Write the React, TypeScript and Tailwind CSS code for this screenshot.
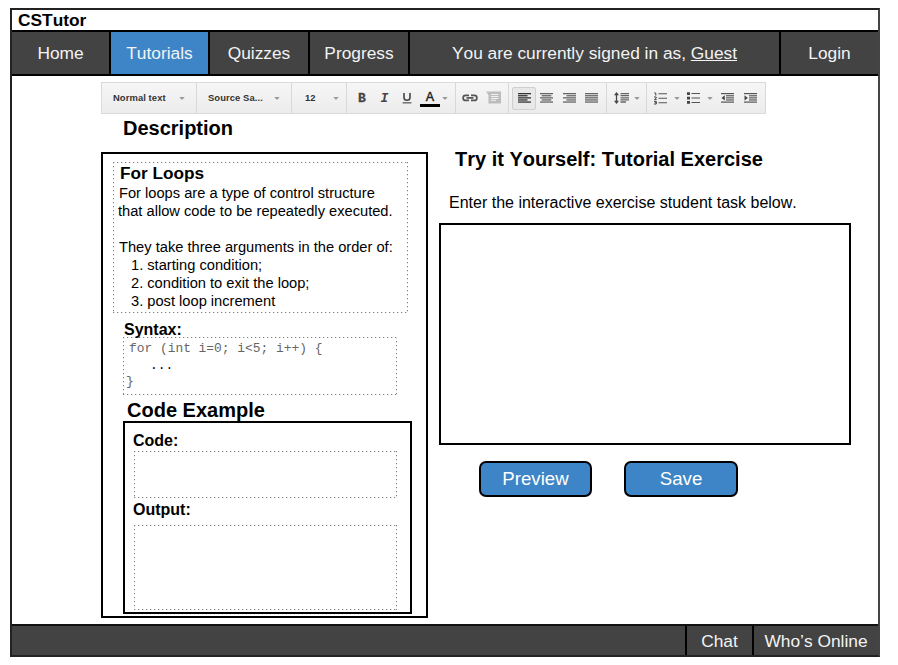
import React from "react";

function Caret({ className }: { className: string }) {
  return (
    <svg className={`shrink-0 ${className}`} width="6" height="3" viewBox="0 0 6 3">
      <path d="M0.3 0H5.7L3 3Z" fill="#999" />
    </svg>
  );
}

function Lines({ kind, className, color = "#666" }: { kind: "left" | "center" | "right" | "full"; className: string; color?: string }) {
  const shortX = kind === "center" ? 1.7 : kind === "right" ? 3.5 : 0;
  const shortW = kind === "full" ? 13 : kind === "center" ? 9.6 : 9.5;
  return (
    <svg className={`shrink-0 ${className}`} width="13" height="10" viewBox="0 0 13 10">
      {[0, 2.1, 4.2, 6.3, 8.4].map((y, i) => (
        <rect key={y} x={i % 2 ? shortX : 0} y={y} width={i % 2 ? shortW : 13} height="1.3" fill={color} />
      ))}
    </svg>
  );
}

function IndentIcon({ className, inward }: { className: string; inward: boolean }) {
  return (
    <svg className={`shrink-0 ${className}`} width="13" height="10" viewBox="0 0 13 10">
      <rect x="0" y="0" width="13" height="1.2" fill="#555" />
      <rect x="5" y="2.1" width="8" height="1.3" fill="#666" />
      <rect x="5" y="4.2" width="8" height="1.3" fill="#666" />
      <rect x="5" y="6.3" width="8" height="1.3" fill="#666" />
      <rect x="0" y="8.5" width="13" height="1.2" fill="#555" />
      <path d={inward ? "M0.5 2.2L3.8 4.9L0.5 7.6Z" : "M3.8 2.2L0.5 4.9L3.8 7.6Z"} fill="#444" />
    </svg>
  );
}

const section = "flex h-full shrink-0 items-center border-r border-[#d8d8d8]";

function Toolbar() {
  return (
    <div className="ml-[89px] mt-[6px] flex h-[32px] w-[665px] border border-r-0 border-[#dadada] bg-gradient-to-b from-[#f6f6f6] to-[#ececec] text-[9.4px] font-bold tracking-[0.1px] text-[#333]">
      <div className={`${section} w-[95px]`}>
        <span className="ml-[11px] w-[66px] whitespace-nowrap">Normal text</span>
        <Caret className="" />
      </div>
      <div className={`${section} w-[95px]`}>
        <span className="ml-[11px] w-[66px] whitespace-nowrap">Source Sa...</span>
        <Caret className="" />
      </div>
      <div className={`${section} w-[55px]`}>
        <span className="ml-[13px] w-[28px]">12</span>
        <Caret className="" />
      </div>
      <div className={`${section} w-[109px]`}>
        <span className="ml-[10px] w-[10px] text-center font-['Liberation_Mono'] text-[13px] leading-none text-[#444] [-webkit-text-stroke:0.3px_#444]">B</span>
        <span className="ml-[13px] w-[9px] text-center font-['Liberation_Mono'] text-[13px] italic leading-none text-[#444]">I</span>
        <svg className="ml-[13px] shrink-0" width="10" height="12" viewBox="0 0 10 12">
          <path d="M2 1V5.6Q2 8.3 5 8.3Q8 8.3 8 5.6V1" fill="none" stroke="#444" strokeWidth="1.6" />
          <rect x="0.6" y="10.3" width="8.8" height="1.1" fill="#444" />
        </svg>
        <span className="ml-[8px] mt-[1px] flex h-[17px] w-[20px] flex-col items-center justify-between font-normal text-[12.5px] leading-[14px] text-[#222]">
          <span className="[-webkit-text-stroke:0.4px_#222]">A</span>
          <span className="h-[3px] w-full shrink-0 bg-black" />
        </span>
        <Caret className="ml-[2px]" />
      </div>
      <div className={`${section} w-[53px]`}>
        <svg className="mb-[1px] ml-[6px] shrink-0" width="16" height="8" viewBox="0 0 16 8">
          <path d="M7 1.4H3.6A2.5 2.5 0 0 0 3.6 6.4H7M9 1.4H12.4A2.5 2.5 0 0 1 12.4 6.4H9M4.5 3.9H11.5" fill="none" stroke="#555" strokeWidth="1.7" />
        </svg>
        <svg className="mb-[1px] ml-[8px] shrink-0" width="15" height="13" viewBox="0 0 15 13">
          <path d="M0 0.5H15V12.5H2.5V4Z" fill="#bcbcbc" />
          <path d="M5 3.5H12.5M5 5.5H12.5M5 7.5H12.5M5 9.3H10" stroke="#f1f1f1" />
        </svg>
      </div>
      <div className={`${section} w-[98px]`}>
        <div className="ml-[3px] flex h-[23px] w-[24px] items-center justify-center rounded-[2px] border border-[#cfcfcf] bg-[#e8e8e8]">
          <Lines kind="left" color="#333" className="mb-px" />
        </div>
        <Lines kind="center" className="mb-px ml-[4px]" />
        <Lines kind="right" className="mb-px ml-[10px]" />
        <Lines kind="full" className="mb-px ml-[9px]" />
      </div>
      <div className={`${section} w-[40px]`}>
        <svg className="mb-px ml-[7px] shrink-0" width="15" height="12" viewBox="0 0 15 12">
          <path d="M2.5 1.5V10.5" stroke="#444" strokeWidth="1.3" />
          <path d="M0 3.3L2.5 0L5 3.3ZM0 8.7L2.5 12L5 8.7Z" fill="#444" />
          <path d="M6.5 1.6H15M6.5 3.7H15M6.5 5.8H15M6.5 7.9H15M6.5 10H12" stroke="#666" strokeWidth="1.3" />
        </svg>
        <Caret className="ml-[5px]" />
      </div>
      <div className={`${section} w-[119px]`}>
        <svg className="ml-[7px] shrink-0" width="13" height="13" viewBox="0 0 13 13">
          <path d="M0.3 1H1.8V3.6M0 5H2.2V6.2L0.5 7.6H2.6M0 9.4H2.3V12H0M0.8 10.7H2.3" stroke="#444" strokeWidth="1" fill="none" />
          <path d="M4.5 1.7H13M4.5 6.2H13M4.5 10.7H13" stroke="#555" strokeWidth="1.1" />
        </svg>
        <Caret className="ml-[7px]" />
        <svg className="mb-px ml-[7px] shrink-0" width="13" height="12" viewBox="0 0 13 12">
          <path d="M0 0.3H3V3H0ZM0 4.7H3V7.4H0ZM0 9.1H3V11.8H0Z" fill="#444" />
          <path d="M4.5 1.5H13M4.5 6H13M4.5 10.5H13" stroke="#555" strokeWidth="1.1" />
        </svg>
        <Caret className="ml-[7px]" />
        <IndentIcon inward={false} className="mb-px ml-[8px]" />
        <IndentIcon inward className="mb-px ml-[10px]" />
      </div>
    </div>
  );
}

const navCell = "flex shrink-0 items-center justify-center border-r-2 border-black pt-[2px]";
// One dot every four pixels along each edge.
const dotted =
  "[background:repeating-linear-gradient(90deg,#808080_0_1px,#ddd_1px_2px,transparent_2px_4px)_top/100%_1px_no-repeat,repeating-linear-gradient(90deg,#808080_0_1px,#ddd_1px_2px,transparent_2px_4px)_bottom/100%_1px_no-repeat,repeating-linear-gradient(180deg,#808080_0_1px,#ddd_1px_2px,transparent_2px_4px)_left/1px_100%_no-repeat,repeating-linear-gradient(180deg,#808080_0_1px,#ddd_1px_2px,transparent_2px_4px)_right/1px_100%_no-repeat]";

export default function App() {
  return (
    <div className="h-[665px] w-[898px] overflow-hidden bg-white pl-[10px] pt-[8px] font-['Liberation_Sans',Arial,sans-serif] text-black [font-kerning:none]">
      <div className="flex h-[649px] w-[870px] flex-col border-2 border-[#222] border-r-[#444]">
        <h1 className="h-[20px] shrink-0 whitespace-nowrap pl-[6px] text-[17.33px] font-bold leading-[21px]">CSTutor</h1>
        <nav className="flex h-[46px] shrink-0 border-y-2 border-black bg-[#434343] text-[17.33px] text-[#f3f3f3]">
          <div className={`${navCell} w-[99px]`}>Home</div>
          <div className={`${navCell} w-[99px] bg-[#3d85c6]`}>Tutorials</div>
          <div className={`${navCell} w-[100px]`}>Quizzes</div>
          <div className={`${navCell} w-[100px]`}>Progress</div>
          <div className={`${navCell} w-[371px]`}>
            <span>You are currently signed in as, <span className="underline">Guest</span></span>
          </div>
          <div className="flex flex-1 items-center justify-center pt-[2px]">Login</div>
        </nav>

        <main className="flex h-[548px] shrink-0 flex-col">
          <Toolbar />
          <div className="flex">
            <section className="ml-[89px] w-[327px] shrink-0">
              <h2 className="h-[38px] pl-[22px] text-[20px] font-bold leading-[28px]">Description</h2>
              <div className="h-[466px] border-2 border-black pl-[10px] pt-[8px]">
                <div className={`${dotted} h-[151px] w-[295px] pl-[6px] pt-px text-[14.67px] leading-[18px]`}>
                  <h3 className="pl-[1px] text-[17.2px] font-bold leading-[20px]">For Loops</h3>
                  <p className="whitespace-nowrap pt-[1px]">For loops are a type of control structure</p>
                  <p className="-ml-px whitespace-nowrap">that allow code to be repeatedly executed.</p>
                  <p className="whitespace-nowrap pt-[18px]">They take three arguments in the order of:</p>
                  <ol className="whitespace-nowrap pl-[12px]">
                    <li>1. starting condition;</li>
                    <li>2. condition to exit the loop;</li>
                    <li>3. post loop increment</li>
                  </ol>
                </div>
                <h3 className="h-[24px] pl-[11px] pt-[7px] text-[16px] font-bold leading-[20px]">Syntax:</h3>
                <pre className={`${dotted} ml-[10px] h-[58px] w-[274px] pl-[6px] pt-px font-['Liberation_Mono',monospace] text-[12.9px] leading-[16px] text-[#666]`}>
                  <span className="block h-[20px] pt-[3px]">{"for (int i=0; i<5; i++) {"}</span>
                  <span className="block h-[16px] pl-[21px] text-black">...</span>
                  <span className="-ml-[3px] block">{"}"}</span>
                </pre>
                <h2 className="h-[26px] pl-[14px] text-[20px] font-bold leading-[31px]">Code Example</h2>
                <div className="ml-[10px] h-[193px] w-[289px] border-2 border-black pl-[9px]">
                  <h3 className="-ml-[1px] h-[28px] text-[16px] font-bold leading-[35px]">Code:</h3>
                  <div className={`${dotted} h-[47px] w-[263px]`} />
                  <h3 className="-ml-[1px] h-[27px] text-[16px] font-bold leading-[24px]">Output:</h3>
                  <div className={`${dotted} h-[85px] w-[263px]`} />
                </div>
              </div>
            </section>

            <section className="ml-[11px] w-[412px] shrink-0 pt-[33px]">
              <h2 className="whitespace-nowrap pl-[16px] text-[20px] font-bold leading-[24px]">Try it Yourself: Tutorial Exercise</h2>
              <p className="h-[52px] whitespace-nowrap pl-[10px] pt-[22px] text-[16px] leading-[20px]">Enter the interactive exercise student task below.</p>
              <div className="h-[222px] border-2 border-black" />
              <div className="flex gap-[32px] pl-[40px] pt-[16px] text-[18.67px] text-white">
                <button className="h-[36px] w-[113px] rounded-[7px] border-2 border-black bg-[#3d85c6]">Preview</button>
                <button className="h-[36px] w-[114px] rounded-[7px] border-2 border-black bg-[#3d85c6]">Save</button>
              </div>
            </section>
          </div>
        </main>

        <footer className="flex flex-1 justify-end border-t-2 border-[#111] bg-[#434343] text-[17.33px] text-[#f3f3f3]">
          <div className="flex w-[67px] items-center justify-center border-l-2 border-black pt-[2px]">Chat</div>
          <div className="flex w-[126px] items-center justify-center border-l-2 border-black pt-[2px]">Who’s Online</div>
        </footer>
      </div>
    </div>
  );
}
